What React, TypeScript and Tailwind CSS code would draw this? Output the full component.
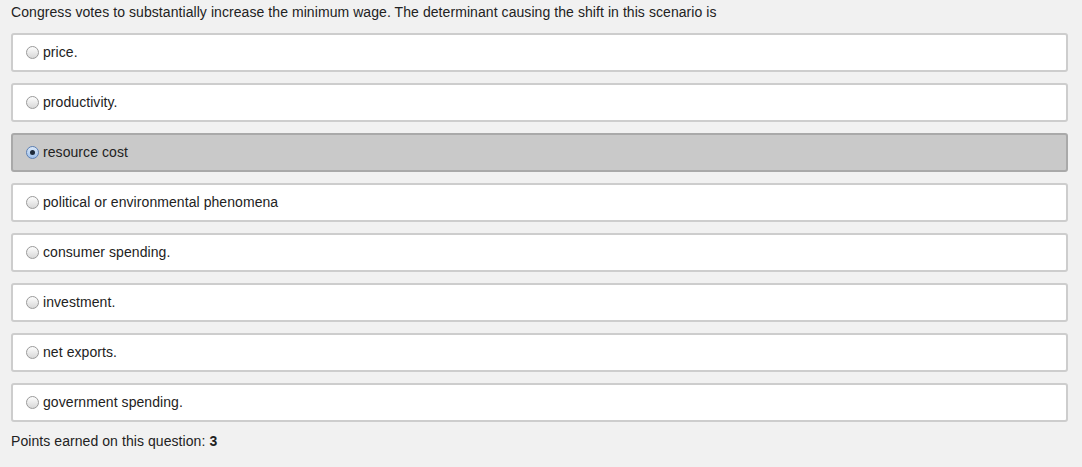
const options = [
  "price.",
  "productivity.",
  "resource cost",
  "political or environmental phenomena",
  "consumer spending.",
  "investment.",
  "net exports.",
  "government spending.",
];

const selected = 2;

const Radio = ({ checked }: { checked: boolean }) => {
  if (checked) {
    return (
      <span className="flex h-[13px] w-[13px] shrink-0 items-center justify-center rounded-full border border-[#5b7fb3] bg-gradient-to-b from-[#dbe8f8] to-[#9fc0ea]">
        <span className="h-[5px] w-[5px] rounded-full bg-[#1d2a3a]" />
      </span>
    );
  }
  return (
    <span className="h-[13px] w-[13px] shrink-0 rounded-full border border-[#9a9a9a] bg-gradient-to-b from-[#fdfdfd] to-[#d8d8d8]" />
  );
};

export default function App() {
  return (
    <div className="min-h-[467px] bg-[#f1f1f1] pl-[11px] pr-[14px] pt-[4px] font-['Liberation_Sans',Arial,sans-serif] text-[14px] tracking-[0.07px] text-[#222]">
      <p className="leading-[17px]">
        Congress votes to substantially increase the minimum wage. The determinant causing the shift in this scenario is
      </p>
      <div className="mt-[12px] flex flex-col gap-[11px]">
        {options.map((opt, i) => (
          <label
            key={opt}
            className={
              i === selected
                ? "flex h-[39px] items-center gap-[4px] rounded-[3px] border-2 border-[#a9a9a9] bg-[#c9c9c9] pl-[13px]"
                : "flex h-[39px] items-center gap-[4px] rounded-[3px] border-2 border-[#cdcdcd] bg-white pl-[13px]"
            }
          >
            <Radio checked={i === selected} />
            <span>{opt}</span>
          </label>
        ))}
      </div>
      <p className="mt-[11px] leading-[17px]">
        Points earned on this question: <b>3</b>
      </p>
    </div>
  );
}
